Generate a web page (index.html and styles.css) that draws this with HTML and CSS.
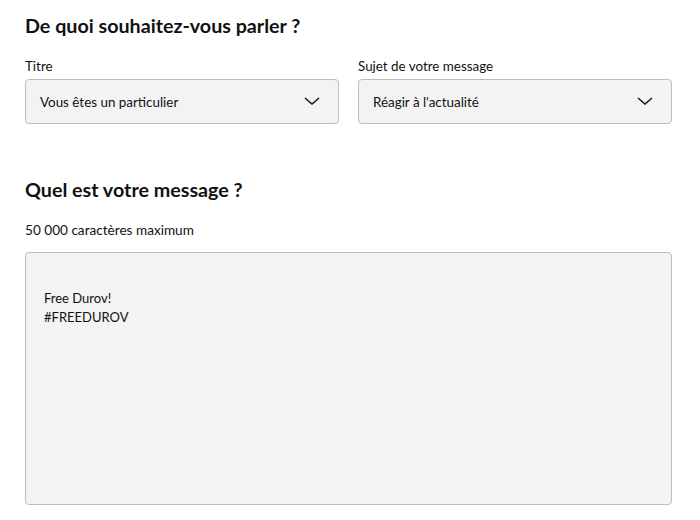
FILE: index.html
```html
<!DOCTYPE html>
<html lang="fr">
<head>
<meta charset="UTF-8">
<title>Contact</title>
<link rel="stylesheet" href="styles.css">
</head>
<body>
<div class="form">
  <h2>De quoi souhaitez-vous parler ?</h2>
  <div class="row">
    <div class="field">
      <label>Titre</label>
      <div class="select">
        <span>Vous êtes un particulier</span>
        <svg class="chevron" viewBox="0 0 16 8" width="16" height="8"><path d="M1 1l7 6 7-6" fill="none" stroke="#1a1a1a" stroke-width="1.6"/></svg>
      </div>
    </div>
    <div class="field">
      <label>Sujet de votre message</label>
      <div class="select">
        <span>Réagir à l'actualité</span>
        <svg class="chevron" viewBox="0 0 16 8" width="16" height="8"><path d="M1 1l7 6 7-6" fill="none" stroke="#1a1a1a" stroke-width="1.6"/></svg>
      </div>
    </div>
  </div>

  <h2 class="second">Quel est votre message ?</h2>
  <p class="hint">50 000 caractères maximum</p>
  <div class="message">
    <p>Free Durov!<br>#FREEDUROV</p>
  </div>
</div>
</body>
</html>
```

FILE: styles.css
```css
body {
  margin: 0;
  font-family: Lato, "Open Sans", sans-serif;
  color: #111;
  background: #fff;
}
.form {
  padding: 13px 28px 0 25px;
}
h2 {
  margin: 0;
  font-size: 19.7px;
  font-weight: 700;
  line-height: 26px;
}
.row {
  display: flex;
  gap: 19px;
  margin-top: 18px;
}
.field {
  flex: 1;
}
label {
  display: block;
  font-size: 13.4px;
  line-height: 18px;
  margin-bottom: 4px;
}
.select {
  display: flex;
  align-items: center;
  justify-content: space-between;
  height: 43px;
  padding: 0 18px 0 14px;
  background: #f3f3f3;
  border: 1px solid #bdbdbd;
  border-radius: 4px;
  font-size: 13.4px;
}
.chevron {
  margin-top: -2px;
}
.second {
  margin-top: 53px;
}
.hint {
  margin: 18px 0 0;
  font-size: 13.6px;
  line-height: 18px;
}
.message {
  margin-top: 13px;
  height: 251px;
  background: #f3f3f3;
  border: 1px solid #bdbdbd;
  border-radius: 4px;
  padding: 0 18px;
}
.message p {
  margin: 36px 0 0;
  font-size: 13px;
  line-height: 19px;
}
```
